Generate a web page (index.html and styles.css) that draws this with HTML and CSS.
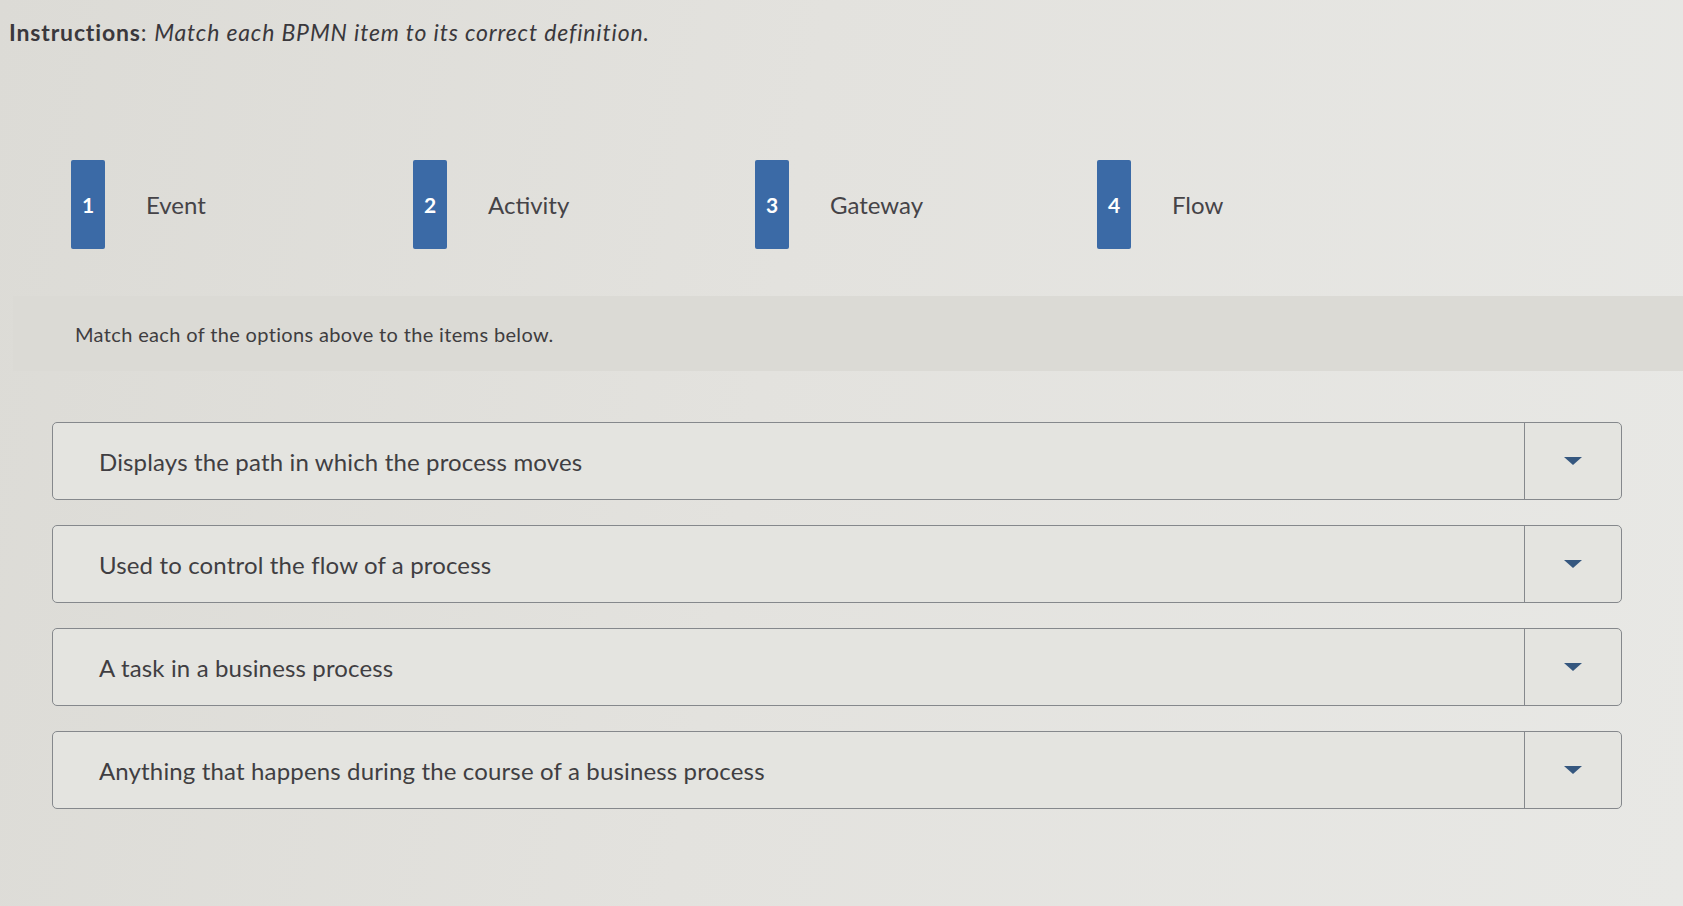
FILE: index.html
```html
<!DOCTYPE html>
<html>
<head>
<meta charset="utf-8">
<link rel="stylesheet" href="styles.css">
</head>
<body>
<div class="page">
  <p class="instructions"><span class="lead">Instructions</span>: <em>Match each BPMN item to its correct definition.</em></p>

  <div class="options">
    <div class="option"><span class="badge">1</span><span class="label">Event</span></div>
    <div class="option"><span class="badge">2</span><span class="label">Activity</span></div>
    <div class="option"><span class="badge">3</span><span class="label">Gateway</span></div>
    <div class="option"><span class="badge">4</span><span class="label">Flow</span></div>
  </div>

  <div class="band">Match each of the options above to the items below.</div>

  <div class="items">
    <div class="item"><div class="item-text">Displays the path in which the process moves</div><div class="item-btn"><span class="caret"></span></div></div>
    <div class="item"><div class="item-text">Used to control the flow of a process</div><div class="item-btn"><span class="caret"></span></div></div>
    <div class="item"><div class="item-text">A task in a business process</div><div class="item-btn"><span class="caret"></span></div></div>
    <div class="item"><div class="item-text">Anything that happens during the course of a business process</div><div class="item-btn"><span class="caret"></span></div></div>
  </div>
</div>
</body>
</html>
```

FILE: styles.css
```css
html, body {
  margin: 0;
  padding: 0;
}
body {
  width: 1683px;
  height: 906px;
  overflow: hidden;
  background: linear-gradient(100deg, #dcdbd6 0%, #e3e2de 45%, #e8e8e5 100%);
  font-family: Lato, "Open Sans", "Liberation Sans", sans-serif;
  color: #3f3d40;
}
.page {
  display: flex;
  flex-direction: column;
}
.instructions {
  margin: 18px 0 0 9px;
  font-size: 23px;
  line-height: 28px;
  letter-spacing: 0.85px;
  color: #3a383c;
}
.instructions .lead {
  font-weight: 700;
}
.instructions em {
  font-style: italic;
}
.options {
  display: flex;
  margin: 114px 0 0 71px;
  height: 89px;
}
.option {
  width: 342px;
  display: flex;
  align-items: center;
}
.badge {
  width: 34px;
  height: 89px;
  background: #3b6aa6;
  border-radius: 2px;
  color: #fff;
  font-weight: 700;
  font-size: 21px;
  display: flex;
  align-items: center;
  justify-content: center;
}
.label {
  margin-left: 41px;
  font-size: 24px;
  color: #454347;
}
.band {
  margin: 47px 0 0 13px;
  height: 75px;
  background: #dbdad5;
  display: flex;
  align-items: center;
  padding-left: 62px;
  font-size: 20px;
  letter-spacing: 0.35px;
  color: #3f3d40;
}
.items {
  margin: 51px 0 0 52px;
  width: 1570px;
  display: flex;
  flex-direction: column;
  gap: 25px;
}
.item {
  height: 78px;
  box-sizing: border-box;
  border: 1.5px solid #85888c;
  border-radius: 5px;
  display: flex;
  background: #e4e4e0;
}
.item-text {
  flex: 1;
  display: flex;
  align-items: center;
  padding-left: 46px;
  font-size: 24px;
  letter-spacing: 0.15px;
  color: #403e42;
}
.item-btn {
  width: 96px;
  border-left: 1.5px solid #85888c;
  display: flex;
  align-items: center;
  justify-content: center;
}
.caret {
  width: 0;
  height: 0;
  border-left: 9px solid transparent;
  border-right: 9px solid transparent;
  border-top: 8px solid #35577f;
}
```
